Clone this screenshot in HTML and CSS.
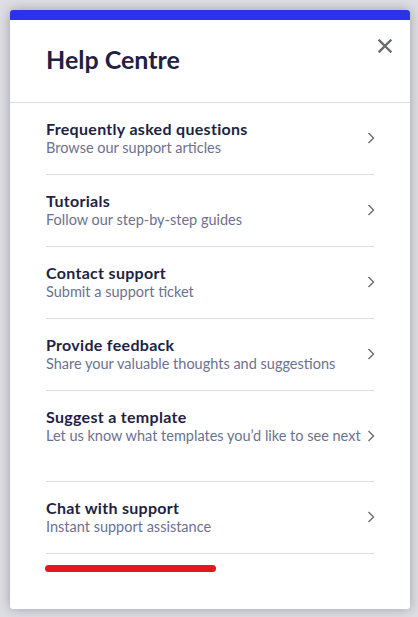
FILE: index.html
```html
<!DOCTYPE html>
<html lang="en">
<head>
<meta charset="utf-8">
<title>Help Centre</title>
<link rel="stylesheet" href="styles.css">
</head>
<body>
<div class="modal">
  <div class="modal-bar"></div>
  <header class="modal-header">
    <h1 class="modal-title">Help Centre</h1>
    <button class="close-btn" aria-label="Close">
      <svg width="14" height="14" viewBox="0 0 14 14"><path d="M1.5 1.5 L12.5 12.5 M12.5 1.5 L1.5 12.5" stroke="#6b6b73" stroke-width="2.4" stroke-linecap="square"/></svg>
    </button>
  </header>
  <ul class="help-list">
    <li class="help-item">
      <div class="help-text">
        <div class="help-name">Frequently asked questions</div>
        <div class="help-desc">Browse our support articles</div>
      </div>
      <svg class="chevron" width="8" height="12" viewBox="0 0 8 12"><path d="M1.5 1 L6.5 6 L1.5 11" fill="none" stroke="#6b6b73" stroke-width="1.4"/></svg>
    </li>
    <li class="help-item">
      <div class="help-text">
        <div class="help-name">Tutorials</div>
        <div class="help-desc">Follow our step-by-step guides</div>
      </div>
      <svg class="chevron" width="8" height="12" viewBox="0 0 8 12"><path d="M1.5 1 L6.5 6 L1.5 11" fill="none" stroke="#6b6b73" stroke-width="1.4"/></svg>
    </li>
    <li class="help-item">
      <div class="help-text">
        <div class="help-name">Contact support</div>
        <div class="help-desc">Submit a support ticket</div>
      </div>
      <svg class="chevron" width="8" height="12" viewBox="0 0 8 12"><path d="M1.5 1 L6.5 6 L1.5 11" fill="none" stroke="#6b6b73" stroke-width="1.4"/></svg>
    </li>
    <li class="help-item">
      <div class="help-text">
        <div class="help-name">Provide feedback</div>
        <div class="help-desc">Share your valuable thoughts and suggestions</div>
      </div>
      <svg class="chevron" width="8" height="12" viewBox="0 0 8 12"><path d="M1.5 1 L6.5 6 L1.5 11" fill="none" stroke="#6b6b73" stroke-width="1.4"/></svg>
    </li>
    <li class="help-item">
      <div class="help-text">
        <div class="help-name">Suggest a template</div>
        <div class="help-desc help-desc-tall">Let us know what templates you’d like to see next</div>
      </div>
      <svg class="chevron" width="8" height="12" viewBox="0 0 8 12"><path d="M1.5 1 L6.5 6 L1.5 11" fill="none" stroke="#6b6b73" stroke-width="1.4"/></svg>
    </li>
    <li class="help-item">
      <div class="help-text">
        <div class="help-name">Chat with support</div>
        <div class="help-desc">Instant support assistance</div>
      </div>
      <svg class="chevron" width="8" height="12" viewBox="0 0 8 12"><path d="M1.5 1 L6.5 6 L1.5 11" fill="none" stroke="#6b6b73" stroke-width="1.4"/></svg>
    </li>
  </ul>
  <div class="highlight"></div>
</div>
</body>
</html>
```

FILE: styles.css
```css
* { box-sizing: border-box; }
html, body { margin: 0; padding: 0; }
body {
  background: #dedee3;
  font-family: Lato, "Liberation Sans", sans-serif;
  padding: 10px 8px 8px 10px;
  width: 418px;
  height: 617px;
  overflow: hidden;
}
.modal {
  width: 400px;
  height: 599px;
  background: #fff;
  border-radius: 3px;
  overflow: hidden;
  box-shadow: 0 0 12px rgba(40, 40, 70, 0.35);
  display: flex;
  flex-direction: column;
}
.modal-bar {
  height: 10px;
  background: #2b32e8;
  flex: none;
}
.modal-header {
  height: 83px;
  flex: none;
  border-bottom: 1px solid #dcdce3;
  display: flex;
  align-items: center;
  justify-content: space-between;
  padding: 0 18px 0 36px;
}
.modal-title {
  margin: 0;
  font-size: 25px;
  font-weight: 700;
  color: #221f42;
  margin-top: -5px;
}
.close-btn {
  border: 0;
  background: none;
  padding: 0;
  width: 14px;
  height: 14px;
  align-self: flex-start;
  margin-top: 19px;
  display: flex;
}
.help-list {
  list-style: none;
  margin: 0;
  padding: 0 36px;
}
.help-item {
  display: flex;
  align-items: center;
  justify-content: space-between;
  padding: 16px 0 17px;
  border-bottom: 1px solid #dcdce3;
}
.help-text {
  display: flex;
  flex-direction: column;
}
.help-name {
  font-size: 16px;
  line-height: 19px;
  font-weight: 700;
  letter-spacing: 0.3px;
  color: #221f42;
}
.help-desc {
  font-size: 14.5px;
  line-height: 19px;
  color: #6d7190;
}
.help-desc-tall {
  min-height: 38px;
}
.chevron {
  flex: none;
  margin-right: -1px;
}
.highlight {
  width: 171px;
  height: 7px;
  background: #e6161d;
  border-radius: 4px;
  margin: 11px 0 0 35px;
}
```
